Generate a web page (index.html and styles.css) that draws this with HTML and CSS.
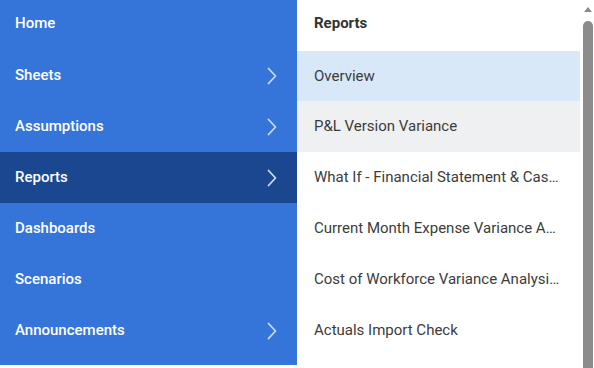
FILE: index.html
```html
<!DOCTYPE html>
<html>
<head>
<meta charset="utf-8">
<link rel="stylesheet" href="styles.css">
</head>
<body>
<div class="app">
  <nav class="nav">
    <div class="nav-item">Home</div>
    <div class="nav-item">Sheets<svg class="chev" viewBox="0 0 10 18"><path d="M1.5 1.5 L8.5 9 L1.5 16.5"/></svg></div>
    <div class="nav-item">Assumptions<svg class="chev" viewBox="0 0 10 18"><path d="M1.5 1.5 L8.5 9 L1.5 16.5"/></svg></div>
    <div class="nav-item active">Reports<svg class="chev" viewBox="0 0 10 18"><path d="M1.5 1.5 L8.5 9 L1.5 16.5"/></svg></div>
    <div class="nav-item">Dashboards</div>
    <div class="nav-item">Scenarios</div>
    <div class="nav-item">Announcements<svg class="chev" viewBox="0 0 10 18"><path d="M1.5 1.5 L8.5 9 L1.5 16.5"/></svg></div>
  </nav>
  <section class="sub">
    <div class="sub-list">
      <div class="sub-head">Reports</div>
      <div class="sub-item selected">Overview</div>
      <div class="sub-item hover">P&amp;L Version Variance</div>
      <div class="sub-item">What If - Financial Statement &amp; Cash Flow</div>
      <div class="sub-item">Current Month Expense Variance Analysis</div>
      <div class="sub-item">Cost of Workforce Variance Analysis Report</div>
      <div class="sub-item">Actuals Import Check</div>
    </div>
    <div class="scrollbar">
      <svg class="arrow" viewBox="0 0 8 6"><path d="M0 6 L4 1 L8 6 Z"/></svg>
      <div class="thumb"></div>
    </div>
  </section>
</div>
</body>
</html>
```
FILE: styles.css
```css
html, body {
  margin: 0;
  padding: 0;
  background: #ffffff;
}
body {
  font-family: Roboto, "Liberation Sans", Arial, sans-serif;
  font-size: 15px;
  width: 594px;
  height: 368px;
  overflow: hidden;
}
.app {
  display: flex;
  width: 594px;
  height: 368px;
}
.nav {
  width: 297px;
  flex: none;
  background: #3574d9;
  display: flex;
  flex-direction: column;
  height: 365px;
}
.nav-item {
  height: 51px;
  flex: none;
  display: flex;
  align-items: center;
  justify-content: space-between;
  padding: 0 20px 2px 15px;
  color: #ffffff;
  font-weight: 500;
  box-sizing: border-box;
}
.nav-item:first-child {
  height: 50px;
  padding-bottom: 5px;
}
.nav-item.active {
  background: #1b4690;
}
.chev {
  width: 10px;
  height: 18px;
  margin-top: 2px;
  fill: none;
  stroke: #c9dbf6;
  stroke-width: 1.8;
  stroke-linecap: round;
  stroke-linejoin: round;
}
.sub {
  flex: 1;
  display: flex;
  background: #ffffff;
}
.sub-list {
  width: 283px;
  flex: none;
  display: flex;
  flex-direction: column;
}
.sub-head, .sub-item {
  height: 51px;
  flex: none;
  padding: 0 20px 0 17px;
  box-sizing: border-box;
  white-space: nowrap;
  overflow: hidden;
  text-overflow: ellipsis;
  display: block;
  line-height: 51px;
}
.sub-head {
  font-weight: 700;
  color: #333333;
  line-height: 47px;
}
.sub-item {
  color: #3c3c3c;
}
.sub-item.selected {
  background: #d9e8f8;
  height: 50px;
  line-height: 50px;
}
.sub-item.hover {
  background: #eff0f2;
}
.scrollbar {
  flex: 1;
  display: flex;
  flex-direction: column;
  align-items: center;
  padding: 6px 1px 0 3px;
  gap: 9px;
}
.arrow {
  width: 8px;
  height: 6px;
  fill: #8a8a8a;
}
.thumb {
  width: 10px;
  flex: 1;
  background: #8c8c8c;
  border-radius: 5px 5px 0 0;
}
```
